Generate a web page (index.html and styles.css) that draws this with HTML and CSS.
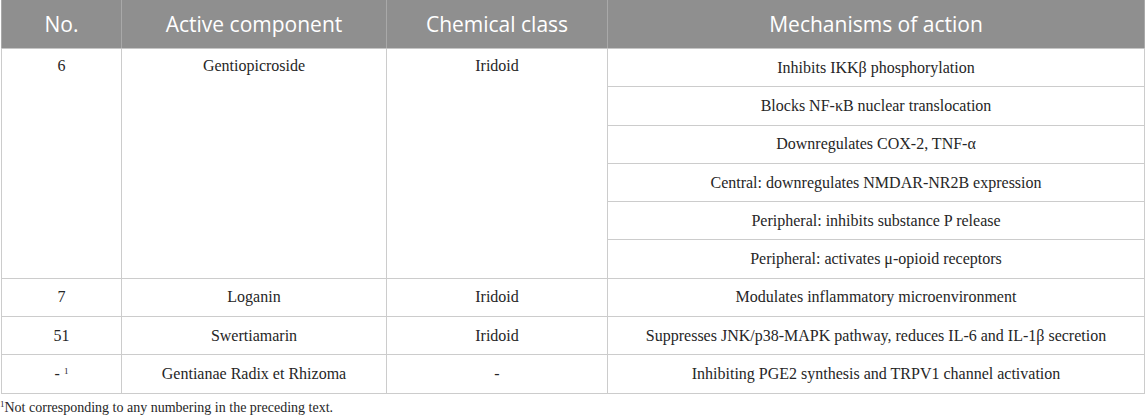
FILE: index.html
```html
<!DOCTYPE html>
<html>
<head>
<meta charset="utf-8">
<link rel="stylesheet" href="styles.css">
</head>
<body>
<div class="page">
<table class="tbl">
  <colgroup>
    <col class="c1"><col class="c2"><col class="c3"><col class="c4">
  </colgroup>
  <thead>
    <tr><th>No.</th><th>Active component</th><th>Chemical class</th><th>Mechanisms of action</th></tr>
  </thead>
  <tbody>
    <tr><td rowspan="6" class="top">6</td><td rowspan="6" class="top">Gentiopicroside</td><td rowspan="6" class="top">Iridoid</td><td>Inhibits IKKβ phosphorylation</td></tr>
    <tr><td>Blocks NF-κB nuclear translocation</td></tr>
    <tr><td>Downregulates COX-2, TNF-α</td></tr>
    <tr><td>Central: downregulates NMDAR-NR2B expression</td></tr>
    <tr><td>Peripheral: inhibits substance P release</td></tr>
    <tr><td>Peripheral: activates μ-opioid receptors</td></tr>
    <tr><td>7</td><td>Loganin</td><td>Iridoid</td><td>Modulates inflammatory microenvironment</td></tr>
    <tr><td>51</td><td>Swertiamarin</td><td>Iridoid</td><td>Suppresses JNK/p38-MAPK pathway, reduces IL-6 and IL-1β secretion</td></tr>
    <tr><td>- <sup>1</sup></td><td>Gentianae Radix et Rhizoma</td><td>-</td><td>Inhibiting PGE2 synthesis and TRPV1 channel activation</td></tr>
  </tbody>
</table>
<p class="note"><sup>1</sup>Not corresponding to any numbering in the preceding text.</p>
</div>
</body>
</html>
```

FILE: styles.css
```css
html, body {
  margin: 0;
  padding: 0;
  background: #ffffff;
}
.page {
  padding: 0 0 0 1px;
  width: 1143px;
}
.tbl {
  width: 1143px;
  border-collapse: collapse;
  table-layout: fixed;
}
.c1 { width: 120px; }
.c2 { width: 265px; }
.c3 { width: 221px; }
.c4 { width: 537px; }
.tbl th {
  background: #8f8f8f;
  color: #ffffff;
  font-family: "Open Sans", sans-serif;
  font-weight: 400;
  font-size: 21px;
  height: 48px;
  padding: 0;
  text-align: center;
  vertical-align: middle;
  border-left: 1px solid #a9a9a9;
  border-right: 1px solid #a9a9a9;
  border-bottom: 1px solid #c6c6c6;
}
.tbl td {
  font-family: "Liberation Serif", "Times New Roman", serif;
  font-size: 16px;
  color: #262626;
  height: 37.3px;
  padding: 0 4px;
  text-align: center;
  vertical-align: middle;
  border: 1px solid #cccccc;
}
.tbl td.top {
  vertical-align: top;
  padding-top: 8px;
}
.tbl sup {
  font-size: 9px;
  vertical-align: 5px;
  line-height: 0;
}
.note {
  margin: 6px 0 0 -1px;
  font-family: "Liberation Serif", "Times New Roman", serif;
  font-size: 14px;
  color: #262626;
}
.note sup {
  font-size: 9px;
  vertical-align: 5px;
  line-height: 0;
}
```
